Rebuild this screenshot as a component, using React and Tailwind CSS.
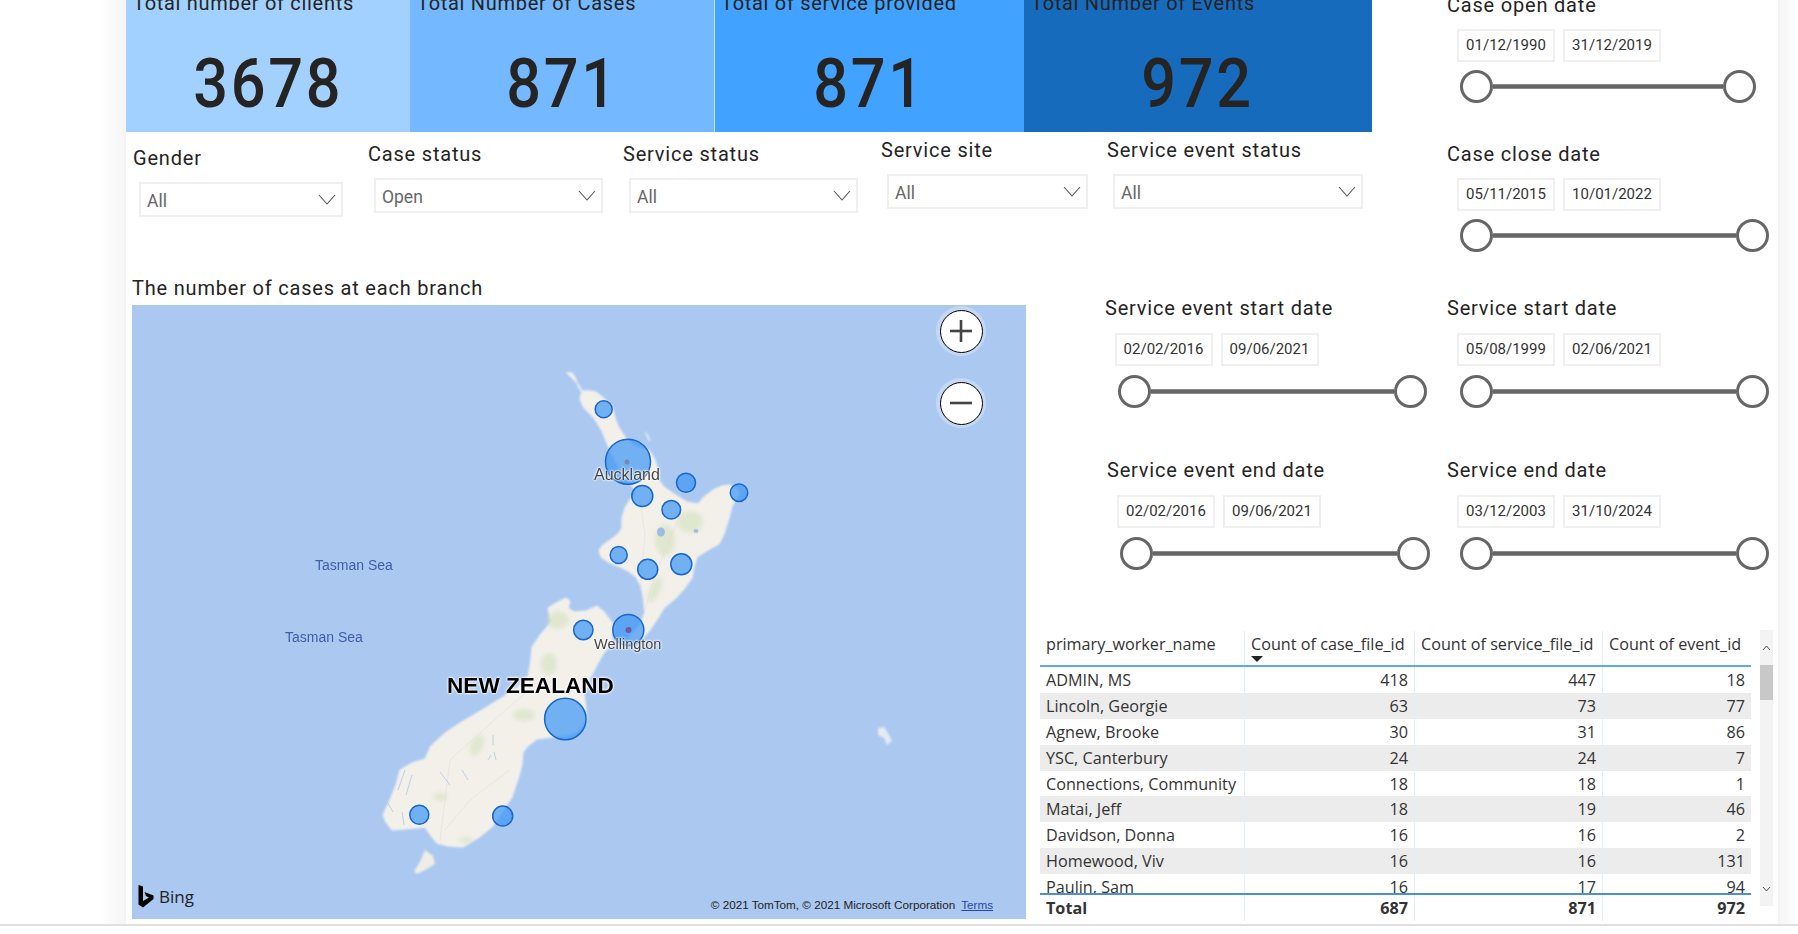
const din = "font-['Roboto',sans-serif]";
const seg = "font-['Open_Sans',sans-serif]";

function Chevron() {
  return (
    <svg width="18" height="11" viewBox="0 0 18 11" fill="none" stroke="#555" strokeWidth="1.1">
      <polyline points="1,1 9,10 17,1" />
    </svg>
  );
}

function Filter({ title, width, mt, ml }) {
  return (
    <div className={`${din} ${ml} ${mt} shrink-0`}>
      <div className="text-[20px] leading-[24px] tracking-[0.8px] text-[#252423]">{title}</div>
      <div className={`mt-[12px] ml-[6px] ${width} h-[35px] border-2 border-[#efefef] flex items-center justify-between pl-[6px] pr-[5px]`}>
        <span className="text-[17.5px] pt-[4px] text-[#666666]">{title === 'Case status' ? 'Open' : 'All'}</span>
        <Chevron />
      </div>
    </div>
  );
}

function Handle() {
  return <div className="w-[33px] h-[33px] rounded-full border-[3px] border-[#666666] bg-white shrink-0" />;
}

function DateSlicer({ title, a, b, sliderWidth, boxLeft = 'ml-[10px]', trackLeft = 'ml-[13px]', boxMt = 'mt-[12px]', sliderMt = 'mt-[9px]', className = '' }) {
  return (
    <div className={`${din} ${className}`}>
      <div className="text-[20px] leading-[24px] tracking-[0.8px] text-[#252423] whitespace-nowrap">{title}</div>
      <div className={`${boxLeft} ${boxMt} flex gap-[8px]`}>
        {[a, b].map((d) => (
          <div key={d} className="w-[98px] h-[33px] border-2 border-[#f0f0f0] flex items-center justify-center text-[15px] text-[#333333]">
            {d}
          </div>
        ))}
      </div>
      <div className={`${trackLeft} ${sliderWidth} ${sliderMt} flex items-center`}>
        <Handle />
        <div className="flex-1 h-[5px] bg-[#666666] border-y border-[#8a8a8a]" />
        <Handle />
      </div>
    </div>
  );
}

const Bubble = ({ x, y, r }) => (
  <circle cx={x} cy={y} r={r} fill="#3f97f5" fillOpacity="0.72" stroke="#1767c8" strokeWidth="1.5" />
);

const bubbles = [
  [603.7, 409.3, 8.5], [628, 461.7, 22.5], [642.3, 496, 10.5], [686, 482.7, 9.5], [671.3, 509.7, 9.3],
  [739, 492.7, 8.7], [618.7, 555, 8.5], [647.7, 569.3, 10], [681.3, 564.3, 10.5], [583.3, 630, 9.7],
  [628.3, 630, 15.5], [565.3, 719, 20.7], [419.3, 814.7, 9.5], [502.7, 816, 10],
];

const north = "566.7,372.7 572,373 575,377 578,386 581,391 590,391 596,392 606,400 612,406 615,418 618,426 625,437 632,444 637,447 645,449 650,451 655,460 658,470 658,479 664,487 674,494 687,502 698,504 704,497 713,490 722,486 730,485 738,490 739,495 732,506 729,518 724,534 719,544 708,550 697,557 694,567 692,578 684,589 676,598 664,608 658,618 650,630 643,638 635,640 628,638 640,625 645,612 643,596 641,586 636,577 628,571 620,567 608,562 601,557 599,550 603,545 610,540 618,534 622,528 622,518 625,508 631,498 636,493 630,482 624,474 616,462 610,450 606,441 602,431 594,418 584,408 580,399 582,391 578,384 572,378";
const south = "566,598 570,601 568,608 574,612 586,611 597,606 604,612 614,625 612,634 612,644 603,654 597,665 588,682 584,694 586,708 586,720 578,731 568,735 552,737 537,739 528,746 523,752 522,764 519,776 512,797 504,809 492,827 478,838 463,847 448,846 437,843 431,836 425,827 405,829 392,830 386,822 383,815 390,800 396,785 400,770 412,763 425,759 431,746 445,733 460,723 482,710 503,697 516,688 528,677 531,660 532,647 541,634 551,622 548,608 556,603";

function NZMap() {
  return (
    <svg viewBox="132 305 894 614" className="absolute inset-0 w-full h-full" aria-hidden="true">
      <defs>
        <filter id="soft" x="-10%" y="-10%" width="120%" height="120%"><feGaussianBlur stdDeviation="0.9" /></filter>
        <filter id="soft2" x="-20%" y="-20%" width="140%" height="140%"><feGaussianBlur stdDeviation="2.2" /></filter>
      </defs>
      <g filter="url(#soft)">
        <polygon points={north} fill="#f3f0ea" stroke="#f6f4ef" strokeWidth="1" />
        <polygon points={south} fill="#f3f0ea" stroke="#f6f4ef" strokeWidth="1" />
        <polygon points="425,850 433,856 435,864 425,870 417,874 414,871 420,862" fill="#f0ede6" />
        <polygon points="878,728 884,727 888,733 892,741 887,745 884,738 878,735" fill="#e6eaf0" />
        <polygon points="645,432 648,440 651,441 647,433" fill="#e8ebee" />
      </g>
      <g filter="url(#soft2)" fill="#cfe0b8" fillOpacity="0.55">
        <ellipse cx="690" cy="522" rx="13" ry="11" />
        <ellipse cx="665" cy="540" rx="10" ry="16" />
        <ellipse cx="655" cy="590" rx="5" ry="14" transform="rotate(25 655 590)" />
        <ellipse cx="558" cy="620" rx="11" ry="9" />
        <ellipse cx="549" cy="664" rx="8" ry="11" />
        <ellipse cx="524" cy="715" rx="11" ry="6" />
        <ellipse cx="477" cy="745" rx="6" ry="11" transform="rotate(25 477 745)" />
        <ellipse cx="440" cy="797" rx="7" ry="4" />
        <ellipse cx="466" cy="840" rx="7" ry="3" />
      </g>
      <g fill="none" stroke="#e6dcdc" strokeWidth="0.6">
        <path d="M640 500 L645 535 L640 590 M680 515 L655 575 L645 610 M540 680 L500 715 L450 760 L440 840 M510 770 L470 800 L445 830" />
      </g>
      <g fill="#9dbde6">
        <ellipse cx="661" cy="532" rx="4" ry="4.5" />
        <ellipse cx="696" cy="531" rx="2.5" ry="2" />
      </g>
      <g fill="none" stroke="#b5cbe6" strokeWidth="0.9">
        <path d="M462 770 L468 780 M440 772 L450 785 M493 735 L493 745 M491 755 L488 760 M494 752 L496 760" />
        <path d="M405 770 L398 790 M412 775 L406 795 M386 800 L393 812 M402 812 L404 825" />
      </g>
      {bubbles.map(([x, y, r]) => <Bubble key={`${x}-${y}`} x={x} y={y} r={r} />)}
      <circle cx="627" cy="462" r="2.5" fill="#7b86b8" />
      <circle cx="628.5" cy="630" r="3" fill="#6d5aa0" />
    </svg>
  );
}

function ZoomBtn({ minus }) {
  return (
    <div className="w-[50px] h-[50px] rounded-full bg-white/30 flex items-center justify-center">
      <div className="w-[43px] h-[43px] rounded-full bg-white border-[1.5px] border-black flex items-center justify-center">
        <svg width="24" height="24" viewBox="0 0 24 24" stroke="#444" strokeWidth="2.6">
          <line x1="1" y1="12" x2="23" y2="12" />
          {!minus && <line x1="12" y1="1" x2="12" y2="23" />}
        </svg>
      </div>
    </div>
  );
}

function MapVisual() {
  const halo = "[text-shadow:0_0_2px_#fff,0_0_2px_#fff,0_0_3px_#fff]";
  return (
    <div className="relative w-[894px] h-[614px] bg-[#abc8f0] overflow-hidden ml-[6px] mt-[3px]">
      <NZMap />
      <span className={`absolute left-[462px] top-[158px] font-['Liberation_Sans',sans-serif] text-[16px] text-[#444] ${halo}`}>Auckland</span>
      <span className={`absolute left-[462px] top-[329px] font-['Liberation_Sans',sans-serif] text-[14.5px] text-[#444] ${halo}`}>Wellington</span>
      <span className={`absolute left-[315px] top-[364px] font-['Liberation_Sans',sans-serif] text-[22.6px] font-bold text-black ${halo}`}>NEW ZEALAND</span>
      <span className="absolute left-[183px] top-[250px] font-['Liberation_Sans',sans-serif] text-[14px] text-[#3f5fa8]">Tasman Sea</span>
      <span className="absolute left-[153px] top-[322px] font-['Liberation_Sans',sans-serif] text-[14px] text-[#3f5fa8]">Tasman Sea</span>
      <div className="absolute left-[804px] top-[1px] flex flex-col gap-[22px]">
        <ZoomBtn />
        <ZoomBtn minus />
      </div>
      <div className="absolute left-[6px] top-[580px] flex items-center gap-[5px]">
        <svg width="16" height="23" viewBox="0 0 16 23" fill="#000">
          <path d="M0.5 0 L5 1.5 V16 L11 12.5 L8 11 L6.5 7 L15.5 10.5 V14 L5 22.5 L0.5 19.5 Z" />
        </svg>
        <span className={`${seg} text-[17px] leading-[22px] text-[#222]`}>Bing</span>
      </div>
      <div className="absolute right-[33px] top-[593px] flex gap-[6px] font-['Liberation_Sans',sans-serif] text-[11.7px] leading-[14px] text-[#222]">
        <span>© 2021 TomTom, © 2021 Microsoft Corporation</span>
        <span className="text-[#2747a8] underline">Terms</span>
      </div>
    </div>
  );
}

const rows = [
  ['ADMIN, MS', 418, 447, 18], ['Lincoln, Georgie', 63, 73, 77], ['Agnew, Brooke', 30, 31, 86],
  ['YSC, Canterbury', 24, 24, 7], ['Connections, Community', 18, 18, 1], ['Matai, Jeff', 18, 19, 46],
  ['Davidson, Donna', 16, 16, 2], ['Homewood, Viv', 16, 16, 131], ['Paulin, Sam', 16, 17, 94],
];
const col = 'grid grid-cols-[205px_170px_188px_148px]';
const sep = 'border-r border-[#e4eefa]';

function Table() {
  return (
    <div className={`${seg} flex text-[16.2px] text-[#333]`}>
      <div className="w-[711px] shrink-0">
        <div className={`${col} h-[36px] border-b-2 border-[#62a8e8] leading-[26px]`}>
          <div className={`${sep} pl-[6px]`}>primary_worker_name</div>
          <div className={`${sep} pl-[6px] relative whitespace-nowrap`}>
            Count of case_file_id
            <span className="absolute left-[6px] top-[25px] w-0 h-0 border-x-[6px] border-x-transparent border-t-[6px] border-t-[#222]" />
          </div>
          <div className={`${sep} pl-[6px] whitespace-nowrap`}>Count of service_file_id</div>
          <div className="pl-[6px] whitespace-nowrap">Count of event_id</div>
        </div>
        <div className="h-[226px] overflow-hidden border-b-2 border-[#4a90d9] box-content -mb-[2px]">
          {rows.map((r, i) => (
            <div key={r[0]} className={`${col} h-[25.9px] leading-[26px] ${i % 2 ? 'bg-[#ececec]' : 'bg-white'}`}>
              <div className={`${sep} pl-[6px] whitespace-nowrap`}>{r[0]}</div>
              <div className={`${sep} pr-[6px] text-right`}>{r[1]}</div>
              <div className={`${sep} pr-[6px] text-right`}>{r[2]}</div>
              <div className="pr-[6px] text-right">{r[3]}</div>
            </div>
          ))}
        </div>
        <div className={`${col} h-[26px] leading-[26px] font-bold mt-[2px]`}>
          <div className={`${sep} pl-[6px]`}>Total</div>
          <div className={`${sep} pr-[6px] text-right`}>687</div>
          <div className={`${sep} pr-[6px] text-right`}>871</div>
          <div className="pr-[6px] text-right">972</div>
        </div>
      </div>
      <div className="ml-[9px] w-[13px] h-[276px] -mt-[1px] bg-[#f3f3f3] flex flex-col items-center">
        <div className="h-[35px] w-full flex items-center justify-center">
          <svg width="9" height="6" viewBox="0 0 9 6" fill="none" stroke="#555"><polyline points="1,5 4.5,1 8,5" /></svg>
        </div>
        <div className="w-full h-[35px] bg-[#c8c8c8]" />
        <div className="flex-1" />
        <div className="h-[34px] w-full flex items-center justify-center">
          <svg width="9" height="6" viewBox="0 0 9 6" fill="none" stroke="#555"><polyline points="1,1 4.5,5 8,1" /></svg>
        </div>
      </div>
    </div>
  );
}

const cards = [
  ['Total number of clients', '3678', 'w-[284px] bg-[#a3d1ff]', 'pl-[7px]'],
  ['Total Number of Cases', '871', 'w-[304px] bg-[#74b8ff]', 'pl-[7px]'],
  ['Total of service provided', '871', 'w-[310px] bg-[#42a2ff] border-l border-white/70', 'pl-[6px]'],
  ['Total Number of Events', '972', 'w-[347.5px] bg-[#176bbd]', 'pl-[7px]'],
];

export default function App() {
  return (
    <div className="w-[1798px] h-[934px] overflow-hidden bg-white flex">
      <div className="w-[126px] h-[924px] shrink-0 bg-gradient-to-r from-white from-80% to-[#f4f4f4]" />
      <div className="w-[1652px] h-[924px] shrink-0 bg-white">
        {/* top band */}
        <div className="flex h-[275px]">
          <div className="w-[1321px] shrink-0">
            <div className={`${din} flex w-[1246px] h-[132px] overflow-hidden`}>
              {cards.map(([t, n, c, p]) => (
                <div key={t} className={`${c} shrink-0 text-[#252423] flex flex-col items-center`}>
                  <div className={`${p} self-stretch text-[20px] leading-[24px] tracking-[0.7px] -mt-[9px] whitespace-nowrap`}>{t}</div>
                  <div className="mt-[29px] text-[68px] leading-[80px] font-medium tracking-[3px] scale-x-[0.9]">{n}</div>
                </div>
              ))}
            </div>
            <div className="flex items-start">
              <Filter title="Gender" width="w-[204px]" mt="mt-[14px]" ml="ml-[7px]" />
              <Filter title="Case status" width="w-[229px]" mt="mt-[10px]" ml="ml-[25px]" />
              <Filter title="Service status" width="w-[229px]" mt="mt-[10px]" ml="ml-[20px]" />
              <Filter title="Service site" width="w-[201px]" mt="mt-[6px]" ml="ml-[23px]" />
              <Filter title="Service event status" width="w-[250px]" mt="mt-[6px]" ml="ml-[19px]" />
            </div>
          </div>
          <div className="flex flex-col">
            <DateSlicer title="Case open date" a="01/12/1990" b="31/12/2019" sliderWidth="w-[296px]" sliderMt="mt-[8px]" className="-mt-[7px]" />
            <DateSlicer title="Case close date" a="05/11/2015" b="10/01/2022" sliderWidth="w-[309px]" sliderMt="mt-[8px]" className="mt-[39px]" />
          </div>
        </div>
        {/* lower band */}
        <div className="flex">
          <div className="w-[914px] shrink-0">
            <div className={`${din} ml-[6px] text-[20px] leading-[27px] tracking-[0.8px] text-[#252423]`}>The number of cases at each branch</div>
            <MapVisual />
          </div>
          <div className="flex-1 min-w-0">
            <div className="grid grid-cols-[341px_1fr] pl-[66px] gap-y-[50px] pt-[21px]">
              <DateSlicer title="Service event start date" a="02/02/2016" b="09/06/2021" sliderWidth="w-[309px]" boxLeft="ml-[9.5px]" boxMt="mt-[13px]" className="-ml-[1px]" />
              <DateSlicer title="Service start date" a="05/08/1999" b="02/06/2021" sliderWidth="w-[309px]" boxMt="mt-[13px]" />
              <DateSlicer title="Service event end date" a="02/02/2016" b="09/06/2021" sliderWidth="w-[310px]" boxMt="mt-[13px]" className="ml-[1px]" />
              <DateSlicer title="Service end date" a="03/12/2003" b="31/10/2024" sliderWidth="w-[309px]" boxMt="mt-[13px]" />
            </div>
            <div className="mt-[61px]">
              <Table />
            </div>
          </div>
        </div>
      </div>
      <div className="w-[20px] h-[924px] shrink-0 bg-gradient-to-r from-[#f4f4f4] to-white" />
      <div className="fixed left-0 right-0 top-[924px] h-[2px] bg-[#e0e0e4]" />
    </div>
  );
}
